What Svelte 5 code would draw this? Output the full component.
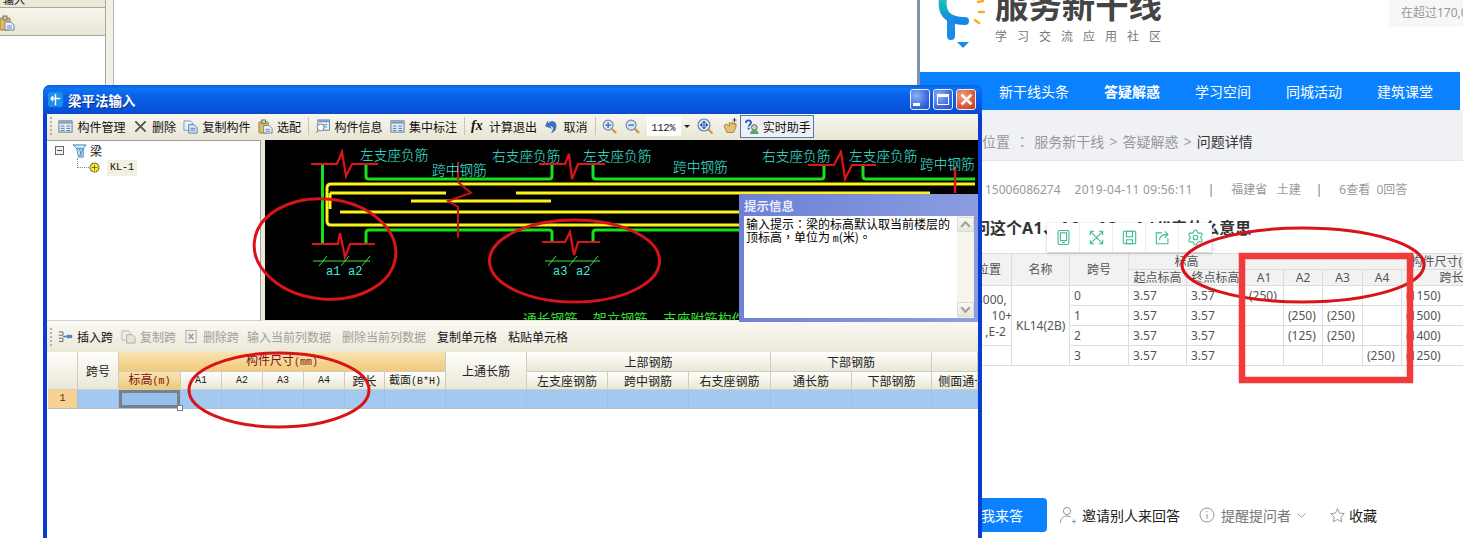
<script>
  const gridCols = [30,41,62,41,41,41,41,40,61,81,81,81,82,81,80,46];
  const rows = [
    { n: '0', a: ['(250)','','',''], s: '(1150)' },
    { n: '1', a: ['','(250)','(250)',''], s: '(1500)' },
    { n: '2', a: ['','(125)','(250)',''], s: '(1400)' },
    { n: '3', a: ['','','','(250)'], s: '(1250)' }
  ];
  const webCols = [62,58,59,58,58,39,39,40,39,100];
  const labels = [
    ['左支座负筋',360,161],['跨中钢筋',432,176],['右支座负筋',492,162],['左支座负筋',583,162],
    ['跨中钢筋',673,173],['右支座负筋',762,162],['左支座负筋',849,162],['跨中钢筋',920,170]
  ];
  let gear = '';
  for (let i = 0; i < 48; i++) {
    const t = (i / 48) * Math.PI * 2;
    const r = 8.2 + 1.5 * Math.cos(t * 6);
    gear += (i ? 'L' : 'M') + (11 + r * Math.sin(t)).toFixed(2) + ' ' + (11 - r * Math.cos(t)).toFixed(2);
  }
  gear += 'Z';
</script>

<svg class="defs" width="0" height="0" aria-hidden="true">
  <defs>
    <symbol id="i-table" viewBox="0 0 16 16"><rect x="1" y="2" width="14" height="12" fill="#e8eef7" stroke="#56749e"/><rect x="1.5" y="2.5" width="13" height="2.5" fill="#7d9bc6"/><path d="M3 7.5h4M3 10h4M3 12.2h4M9 7.5h4M9 10h4M9 12.2h4" stroke="#56749e"/></symbol>
    <symbol id="i-x" viewBox="0 0 16 16"><path d="M2.5 2.5L13.5 13.5M13.5 2.5L2.5 13.5" stroke="#555" stroke-width="2"/></symbol>
    <symbol id="i-copy" viewBox="0 0 16 16"><path d="M1 2h7l2 2v8H1z" fill="#e9eff8" stroke="#7d92b4"/><path d="M6 6h6l3 3v6H6z" fill="#d5e2f4" stroke="#5f7fb0"/><path d="M8 10h5M8 12h5" stroke="#5f7fb0"/></symbol>
    <symbol id="i-clip" viewBox="0 0 16 16"><rect x="1" y="3" width="10" height="12" rx="1" fill="#e0bc62" stroke="#9a7d35"/><rect x="4" y="1" width="4" height="4" fill="#c9c9c0" stroke="#77736a"/><path d="M6 7h6l3 3v5H6z" fill="#eef3fa" stroke="#6b84ab"/><path d="M8 11h5M8 13h5" stroke="#6b84ab"/></symbol>
    <symbol id="i-info" viewBox="0 0 16 16"><rect x="3" y="1" width="12.5" height="11" fill="#eef3fa" stroke="#5f7fb0"/><rect x="3.5" y="1.5" width="11.5" height="2" fill="#6f90c8"/><path d="M9 6h4M9 8.5h4" stroke="#5f7fb0"/><circle cx="6" cy="9" r="3.7" fill="#fff" stroke="#6a7a8a"/><path d="M3.5 12L1.5 14.5" stroke="#c8a14c" stroke-width="2"/></symbol>
    <symbol id="i-undo" viewBox="0 0 16 16"><path d="M1.5 7.5L4 2v3.2C9-.5 15.5 3.6 12 11.5 10.8 13.5 9.5 14 8 14.5 11 11 10.5 6.5 6 7.5L8 10z" fill="#3a72c9" stroke="#2a55a0" stroke-width=".5"/></symbol>
    <symbol id="i-zin" viewBox="0 0 16 16"><circle cx="6.5" cy="6.5" r="5.3" fill="#dbe7f6" stroke="#6b86a8" stroke-width="1.2"/><path d="M10.5 10.5L15 15" stroke="#c49b45" stroke-width="2.4"/><path d="M3.5 6.5h6M6.5 3.5v6" stroke="#3868b4" stroke-width="1.4"/></symbol>
    <symbol id="i-zout" viewBox="0 0 16 16"><circle cx="6.5" cy="6.5" r="5.3" fill="#dbe7f6" stroke="#6b86a8" stroke-width="1.2"/><path d="M10.5 10.5L15 15" stroke="#c49b45" stroke-width="2.4"/><path d="M3.5 6.5h6" stroke="#3868b4" stroke-width="1.4"/></symbol>
    <symbol id="i-pan" viewBox="0 0 16 16"><circle cx="7" cy="7" r="6" fill="#dbe7f6" stroke="#6b86a8" stroke-width="1.2"/><path d="M11.5 11.5L15.5 15.5" stroke="#c49b45" stroke-width="2.2"/><path d="M3.5 7h7M7 3.5v7M7 3l-1.5 1.8h3zM7 11l-1.5-1.8h3zM3 7l1.8-1.5v3zM11 7L9.2 5.5v3z" stroke="#2f5fa8" fill="#2f5fa8" stroke-width=".8"/></symbol>
    <symbol id="i-hand" viewBox="0 0 16 16"><path d="M2 8l3 6.5h6.5L14 9V5.5l-1.6 1V4.5L10.800 6 10 4 8.600 6 7 4.500 7.500 8 4 6z" fill="#e2c078" stroke="#94793d" stroke-width=".8"/><path d="M12.500 0v4M10.500 2h4" stroke="#333" stroke-width=".9"/></symbol>
    <symbol id="i-help" viewBox="0 0 16 16"><circle cx="11" cy="9" r="3" fill="#c9d3c3" stroke="#556"/><path d="M6.500 16c.3-3.500 2.300-4.500 4.500-4.500s4.200 1 4.500 4.500z" fill="#55a860"/><path d="M2 4.200C2 .8 7.500 .6 7.500 3.900 7.500 6 5 6 5 8" fill="none" stroke="#1f5fb8" stroke-width="1.900"/><rect x="4" y="9.300" width="2" height="2" fill="#1f5fb8"/></symbol>
    <symbol id="i-ins" viewBox="0 0 18 16"><path d="M1 2.500h5v4H1M1 10h5v4H1" fill="none" stroke="#555"/><path d="M6 8h4" stroke="#2b6cc4"/><path d="M6 8l2-1.500v3z" fill="#2b6cc4"/><rect x="10" y="6" width="7" height="4" fill="#4f86cc"/></symbol>
    <symbol id="i-copy-off" viewBox="0 0 16 16"><path d="M1 2h7l2 2v8H1z" fill="#eeeee6" stroke="#b9b9b0"/><path d="M6 6h6l3 3v6H6z" fill="#e4e4dc" stroke="#adadA5"/></symbol>
    <symbol id="i-del-off" viewBox="0 0 16 16"><rect x="2" y="1.500" width="11" height="13" fill="#eee" stroke="#aaa"/><path d="M5 5l5 6M10 5l-5 6" stroke="#999" stroke-width="1.500"/></symbol>
    <symbol id="i-beam" viewBox="0 0 16 16"><path d="M1 2h14l-3 4v9H7L5 6z" fill="#cfe5f5" stroke="#3c8ab8"/><path d="M5 6h7M8 6l2 8M12 6L8 14" stroke="#3c8ab8" fill="none"/></symbol>
    <symbol id="i-gearY" viewBox="0 0 12 12"><circle cx="6" cy="6" r="4.800" fill="#fff02a" stroke="#5e5e18" stroke-dasharray="1.500 .6" stroke-width="1.400"/><path d="M6 3v6M3 6h6" stroke="#66661f"/></symbol>
  </defs>
</svg>

<div class="desk">
  <aside class="left-pane">
    <div class="lp-top"><span>输入</span></div>
    <div class="lp-tool"><svg class="ic16"><use href="#i-clip"/></svg></div>
  </aside>
  <div class="lp-rail"></div>

  <section class="web">
    <header class="brand">
      <svg class="logo" viewBox="0 0 48 52" width="48" height="52">
        <defs><linearGradient id="lg" x1="0" y1="0" x2="0" y2="1"><stop offset="0" stop-color="#1fc9b0"/><stop offset="1" stop-color="#1286ea"/></linearGradient></defs>
        <path d="M6 0C4 14 9 23 28 23" fill="none" stroke="url(#lg)" stroke-width="8" stroke-linecap="round"/>
        <path d="M14 24V38" stroke="#1b8ce8" stroke-width="8" stroke-linecap="round"/>
        <path d="M20 44h12l-6 6z" fill="#1b8ce8"/>
        <path d="M41 4l5-1M42 14h5M38 22l4 3" stroke="#f5b021" stroke-width="2.500" stroke-linecap="round"/>
      </svg>
      <div class="brand-text">
        <div class="brand-name">服务新干线</div>
        <div class="brand-sub">学习交流应用社区</div>
      </div>
      <div class="search">在超过170,000</div>
    </header>
    <nav class="nav">
      <span>新干线头条</span><b>答疑解惑</b><span>学习空间</span><span>同城活动</span><span>建筑课堂</span>
    </nav>
    <div class="crumb">当前位置 <span class="tc">：</span> 服务新干线 &gt; 答疑解惑 &gt; <em>问题详情</em></div>
    <div class="meta">
      <span class="m1">15006086274</span><span class="m2">2019-04-11 09:56:11</span><span class="bar">|</span><span class="m3">福建省&nbsp;&nbsp; 土建</span><span class="bar">|</span><span>6查看&nbsp; 0回答</span>
    </div>
    <h1 class="q">请问这个<span class="q-a">A1、A2、A3、A4</span>代表什么意思</h1>
    <div class="web-table-wrap">
      <table class="wt">
        <colgroup>{#each webCols as c}<col style="width:{c}px"/>{/each}</colgroup>
        <thead>
          <tr>
            <th rowspan="2" class="pos">位置</th><th rowspan="2">名称</th><th rowspan="2">跨号</th><th colspan="2">标高</th><th colspan="5" class="group">构件尺寸(mm)</th>
          </tr>
          <tr><th>起点标高</th><th>终点标高</th><th>A1</th><th>A2</th><th>A3</th><th>A4</th><th>跨长</th></tr>
        </thead>
        <tbody>
          {#each rows as r, i}
            <tr>
              {#if i === 0}
                <td rowspan="3" class="pos-c">3000,<br/>&nbsp;&nbsp;&nbsp;&nbsp;&nbsp;10+<br/>&nbsp;&nbsp;&nbsp;,E-2</td>
                <td rowspan="4" class="name">KL14(2B)</td>
              {/if}
              {#if i === 3}<td class="pos-blank"></td>{/if}
              <td>{r.n}</td><td>3.57</td><td>3.57</td>
              {#each r.a as v}<td>{v}</td>{/each}
              <td>{r.s}</td>
            </tr>
          {/each}
        </tbody>
      </table>
      <div class="float-tools">
        <span><svg viewBox="0 0 22 22"><rect x="4" y="2" width="14" height="18" rx="1.500"/><rect x="7" y="5" width="8" height="10"/><path d="M9 17.500h4"/></svg></span>
        <span><svg viewBox="0 0 22 22"><path d="M3 8V3h5M19 8V3h-5M3 14v5h5M19 14v5h-5M3 3l16 16M19 3L3 19"/></svg></span>
        <span><svg viewBox="0 0 22 22"><rect x="3" y="3" width="16" height="16" rx="1"/><rect x="7" y="3" width="8" height="7"/><rect x="7" y="14" width="8" height="5"/></svg></span>
        <span><svg viewBox="0 0 22 22"><path d="M10 5H3v14h15v-7M7 14c1-5 5-7 10-7M14 3l4 4-4 4"/></svg></span>
        <span><svg viewBox="0 0 22 22"><path d={gear}/><circle cx="11" cy="11" r="3"/></svg></span>
      </div>
    </div>
    <footer class="actions">
      <button class="answer">我来答</button>
      <span class="act invite"><svg viewBox="0 0 18 18"><circle cx="8" cy="5" r="3.600"/><path d="M1.500 17c0-5 3-7 6.500-7 1.500 0 2.800.4 3.800 1.200M13 15.500h4M15 13.500v4"/></svg><span>邀请别人来回答</span></span>
      <span class="act remind"><svg viewBox="0 0 18 18"><circle cx="9" cy="9" r="7"/><path d="M9 8v5M9 5v1.300"/></svg><span>提醒提问者</span><svg class="chev" viewBox="0 0 12 12"><path d="M1.500 3.500L6 8l4.500-4.500"/></svg></span>
      <span class="act fav"><svg viewBox="0 0 18 18"><path d="M9 1.800l2.200 4.700 5 .6-3.700 3.500 1 5.100L9 13.200l-4.500 2.500 1-5.100L1.800 7.100l5-.6z"/></svg><span>收藏</span></span>
    </footer>
  </section>

  <section class="dlg">
    <div class="title">
      <svg class="t-ic" viewBox="0 0 16 16"><rect width="16" height="16" rx="3" fill="#1c8fe8"/><path d="M8 2v12M3 7h10M3 7l2.500-2.500M3 7l2.500 2.500" stroke="#fff" stroke-width="1.500" fill="none"/></svg>
      <strong>梁平法输入</strong>
      <div class="wbtns">
        <span class="wb"><i class="min"></i></span>
        <span class="wb"><i class="max"></i></span>
        <span class="wb close"><svg viewBox="0 0 12 12"><path d="M1.500 1.500l9 9M10.500 1.500l-9 9" stroke="#fff" stroke-width="2.600"/></svg></span>
      </div>
    </div>

    <div class="tb">
      <i class="grip"></i>
      <span class="it"><svg class="ic"><use href="#i-table"/></svg>构件管理</span>
      <span class="it"><svg class="ic"><use href="#i-x"/></svg>删除</span>
      <span class="it"><svg class="ic"><use href="#i-copy"/></svg>复制构件</span>
      <span class="it"><svg class="ic"><use href="#i-clip"/></svg>选配</span>
      <i class="sep"></i>
      <span class="it"><svg class="ic"><use href="#i-info"/></svg>构件信息</span>
      <span class="it"><svg class="ic"><use href="#i-table"/></svg>集中标注</span>
      <i class="sep"></i>
      <span class="it"><b class="fx">fx</b>计算退出</span>
      <span class="it"><svg class="ic"><use href="#i-undo"/></svg>取消</span>
      <i class="sep"></i>
      <svg class="ic z"><use href="#i-zin"/></svg>
      <svg class="ic z"><use href="#i-zout"/></svg>
      <span class="combo"><span class="lat">112%</span></span>
      <span class="drop"></span>
      <svg class="ic pan"><use href="#i-pan"/></svg>
      <svg class="ic hand"><use href="#i-hand"/></svg>
      <span class="helper"><svg class="ic"><use href="#i-help"/></svg>实时助手</span>
    </div>

    <div class="main">
      <div class="tree">
        <div class="node">
          <span class="minus"></span>
          <svg class="ic"><use href="#i-beam"/></svg>
          <span class="node-t">梁</span>
        </div>
        <div class="leaf">
          <span class="dots"></span>
          <svg class="gy"><use href="#i-gearY"/></svg>
          <span class="kl lat">KL-1</span>
        </div>
      </div>

      <svg class="cad" viewBox="265 141 713 180" width="713" height="180">
        <g fill="none" stroke="#16e01a" stroke-width="3">
          <path d="M322.500 165V245"/>
          <path d="M366 165V177q0 3 3 3H549q3 0 3-3V165"/>
          <path d="M593 165V177q0 3 3 3H821q3 0 3-3V165"/>
          <path d="M863 165V177q0 3 3 3H975"/>
          <path d="M366 244V234q0-3 3-3H549q3 0 3 3V243"/>
          <path d="M593 243V234q0-3 3-3H978"/>
        </g>
        <g fill="none" stroke="#fbf31c" stroke-width="3">
          <path d="M975 185H331q-4 0-4 4V222q0 4 4 4H975"/>
          <path d="M330 194V210" stroke-width="3"/>
          <path d="M330 194H446M516 194H930M411 202H551M340 213H978"/>
        </g>
        <path d="M458 163V183L471 194L448 202L458 208V239" fill="none" stroke="#cc1018" stroke-width="2"/>
        <path d="M955 168V194" stroke="#e0121a" stroke-width="2.500"/>
        <g fill="none" stroke="#e0121a" stroke-width="2.200">
          <path d="M311 165H337L342 153L346 177L352 165H378"/>
          <path d="M539 165H565L569 155L572 180L578 165H605"/>
          <path d="M808 166H834L841 153L845 180L852 166H876"/>
          <path d="M312 245H338L340 234L345 258L350 245H375"/>
          <path d="M542 243H565L570 233L574 256L578 243H600"/>
        </g>
        <g stroke="#3fe03f" stroke-width="1" fill="none">
          <path d="M313 262H370M319 267L327 257M341 267L349 257M362 267L370 257"/>
          <path d="M545 262H600M548 267L556 257M569 267L577 257M590 267L598 257"/>
        </g>
        <g class="cad-dim">
          <text x="326" y="276">a1</text><text x="348" y="276">a2</text>
          <text x="553" y="276">a3</text><text x="576" y="276">a2</text>
        </g>
        <g class="cad-t">
          {#each labels as l}<text x={l[1]} y={l[2]}>{l[0]}</text>{/each}
        </g>
        <g class="cad-b">
          <text x="523" y="325">通长钢筋</text><text x="593" y="325">架立钢筋</text><text x="663" y="325">支座附筋构件</text>
        </g>
      </svg>

      <div class="tip">
        <div class="tip-h">提示信息</div>
        <div class="tip-b">
          <p>输入提示<span class="tc">：</span>梁的标高默认取当前楼层的顶标高<span class="tc">，</span>单位为 <span class="lat">m</span>(米)<span class="tc">。</span></p>
          <div class="sb">
            <span class="sb-b"><svg viewBox="0 0 12 12"><path d="M2 8l4-4 4 4" fill="none" stroke="#9aa59a" stroke-width="2"/></svg></span>
            <span class="sb-b"><svg viewBox="0 0 12 12"><path d="M2 4l4 4 4-4" fill="none" stroke="#9aa59a" stroke-width="2"/></svg></span>
          </div>
        </div>
      </div>
    </div>

    <div class="tb tb2">
      <i class="grip"></i>
      <span class="it"><svg class="ic ins"><use href="#i-ins"/></svg>插入跨</span>
      <span class="it off"><svg class="ic"><use href="#i-copy-off"/></svg>复制跨</span>
      <span class="it off"><svg class="ic"><use href="#i-del-off"/></svg>删除跨</span>
      <span class="it off plain">输入当前列数据</span>
      <span class="it off plain">删除当前列数据</span>
      <span class="it plain">复制单元格</span>
      <span class="it plain">粘贴单元格</span>
    </div>

    <div class="grid-wrap">
      <table class="grid">
        <colgroup>{#each gridCols as c}<col style="width:{c}px"/>{/each}</colgroup>
        <thead>
          <tr class="r1">
            <th rowspan="2"></th><th rowspan="2">跨号</th>
            <th colspan="7" class="hot">构件尺寸<span class="lat">(mm)</span></th>
            <th rowspan="2">上通长筋</th><th colspan="3">上部钢筋</th><th colspan="2">下部钢筋</th><th></th>
          </tr>
          <tr class="r2">
            <th class="hot">标高<span class="lat">(m)</span></th>
            <th class="lat">A1</th><th class="lat">A2</th><th class="lat">A3</th><th class="lat">A4</th><th>跨长</th><th class="small">截面<span class="lat">(B*H)</span></th>
            <th>左支座钢筋</th><th>跨中钢筋</th><th>右支座钢筋</th><th>通长筋</th><th>下部钢筋</th><th class="clip">侧面通长筋</th>
          </tr>
        </thead>
        <tbody>
          <tr>
            <td class="rh lat">1</td><td></td><td class="sel"><i></i></td>
            {#each Array(13) as _}<td></td>{/each}
          </tr>
        </tbody>
      </table>
    </div>
  </section>

  <svg class="marks" viewBox="0 0 1463 538" width="1463" height="538">
    <g fill="none" stroke="#d8141a" stroke-width="3">
      <ellipse cx="325" cy="249" rx="71" ry="50" transform="rotate(6 325 249)"/>
      <ellipse cx="574.500" cy="261" rx="85" ry="41"/>
      <ellipse cx="279" cy="390" rx="90" ry="37"/>
      <ellipse cx="1303" cy="265" rx="121" ry="37"/>
    </g>
    <rect x="1242" y="256" width="168" height="124" fill="none" stroke="#f33a3a" stroke-width="6.500"/>
  </svg>
</div>

<style>
  :global(body) { margin: 0; background: #fff; }
  .defs { position: absolute; }
  .desk { position: relative; width: 1463px; height: 538px; overflow: hidden; background: #fff; font-family: "Noto Sans", "Noto Sans CJK SC", sans-serif; }
  .lat { font-family: "Liberation Mono", monospace; font-size: 10px; }
  .tc { font-family: "Noto Sans CJK TC", sans-serif; }

  .left-pane { position: absolute; left: 0; top: 0; width: 106px; height: 538px; border-right: 1px solid #a8a8a0; box-sizing: border-box; }
  .lp-top { height: 8px; background: #ece9d8; border-bottom: 1px solid #aca899; overflow: hidden; font-size: 11px; line-height: 1; box-sizing: border-box; }
  .lp-top span { display: block; margin-top: -6px; margin-left: 3px; }
  .lp-tool { height: 28px; background: linear-gradient(#f6f5ec, #e9e6d6); border-bottom: 1px solid #a8a8a0; display: flex; align-items: center; box-sizing: border-box; padding-top: 3px; }
  .ic16 { width: 16px; height: 16px; margin-left: -1px; }
  .lp-rail { position: absolute; left: 106px; top: 0; width: 7px; height: 538px; background: #f1efe6; border-right: 1px solid #b9b9b2; }

  .web { position: absolute; left: 917px; top: 0; width: 546px; height: 538px; border-left: 3px solid #8393ad; overflow: hidden; background: #fff; display: flex; flex-direction: column; box-sizing: border-box; }
  .brand { height: 72px; flex: none; display: flex; align-items: flex-end; padding-bottom: 22px; box-sizing: border-box; padding-left: 17px; }
  .logo { flex: none; margin-right: 10px; }
  .brand-text { padding-bottom: 7px; }
  .brand-name { font-size: 33.4px; line-height: 33px; font-weight: 700; color: #444; white-space: nowrap; }
  .brand-sub { font-size: 12px; line-height: 12px; margin-top: 9px; letter-spacing: 10px; color: #777; white-space: nowrap; }
  .search { align-self: flex-start; margin-left: auto; width: 74px; height: 27px; box-sizing: border-box; background: #f7f7f7; border-radius: 0 0 0 4px; font-size: 12px; line-height: 25px; padding-left: 12px; color: #999; white-space: nowrap; overflow: hidden; }
  .nav { height: 38px; width: 540px; flex: none; background: #0a82ff; color: #fff; display: flex; align-items: center; font-size: 14px; padding-left: 79px; gap: 35px; box-sizing: border-box; }
  .nav b { font-weight: 700; }
  .crumb { height: 51px; flex: none; background: #eff1f4; border-bottom: 1px solid #e6e6e6; box-sizing: border-box; font-size: 14px; line-height: 62px; color: #999; padding-left: 34px; white-space: nowrap; word-spacing: 1.5px; }
  .crumb em { font-style: normal; color: #333; }
  .meta { height: 56px; flex: none; box-sizing: border-box; padding: 19px 0 0 65px; font-size: 12px; line-height: 20px; color: #999; display: flex; white-space: nowrap; }
  .m1 { margin-right: 14px; }
  .m2 { letter-spacing: .25px; }
  .bar { margin: 0 17px 0 15px; color: #777; }
  .q { margin: -1px 0 0 38px; font-size: 16px; line-height: 24px; height: 24px; font-weight: 700; color: #333; white-space: nowrap; flex: none; }
  .q-a { letter-spacing: .4px; }
  .web-table-wrap { position: relative; flex: none; margin-top: 13px; padding-left: 29px; height: 130px; }
  .wt { table-layout: fixed; border-collapse: collapse; width: 552px; font-size: 12px; color: #555; }
  .wt th, .wt td { border: 1px solid #ddd; padding: 0 4px; height: 20px; box-sizing: border-box; font-weight: 400; white-space: nowrap; overflow: hidden; }
  .wt thead th { background: #f2f2f2; height: 16px; line-height: 15px; text-align: center; }
  .wt td { line-height: 19px; text-align: left; }
  .wt .pos { text-align: right; padding-right: 10px; }
  .wt .pos-c { text-align: left; padding-left: 26px; line-height: 16px; }
  .wt .name { text-align: left; padding-left: 4px; }
  .wt .group { text-align: right; padding-right: 13px; }
  .float-tools { position: absolute; left: 127px; top: -30px; width: 165px; height: 29px; display: flex; background: #fff; box-shadow: 0 1px 3px rgba(0,0,0,.25); }
  .float-tools span { flex: 1; display: flex; align-items: center; justify-content: center; border-right: 1px solid #eee; }
  .float-tools svg { width: 17px; height: 17px; fill: none; stroke: #3ebd8c; stroke-width: 1.400; }
  .actions { height: 60px; display: flex; align-items: center; font-size: 14px; color: #222; position: absolute; top: 485px; left: 0; }
  .answer { width: 127px; height: 34px; background: #0a82ff; border: 0; border-radius: 4px; color: #fff; font: inherit; text-align: right; padding: 0 24px 0 0; margin-right: 12px; }
  .act { display: inline-flex; align-items: center; gap: 5px; white-space: nowrap; }
  .act svg { width: 18px; height: 18px; fill: none; stroke: #8e959e; stroke-width: 1; }
  .invite { margin-right: 18px; }
  .remind { color: #777; margin-right: 22px; }
  .act .chev { width: 11px; height: 11px; }
  .fav svg { width: 17px; height: 17px; }
  .fav { gap: 3px; }

  .dlg { position: absolute; left: 43px; top: 85px; width: 939px; height: 470px; background: #fff; box-sizing: border-box; border: solid #0a3cd0; border-width: 0 4px 0 4px; border-radius: 7px 7px 0 0; display: flex; flex-direction: column; font-family: "Noto Sans CJK SC", sans-serif; font-size: 12px; color: #111; }
  .title { flex: none; height: 29px; margin: 0 -4px; padding: 0 6px 0 5px; display: flex; align-items: center; border-radius: 7px 7px 0 0; background: linear-gradient(#0a5be0 0%, #0f74f2 12%, #0861e6 40%, #0554df 80%, #0a4cc8 100%); color: #fff; }
  .t-ic { width: 15px; height: 15px; margin-right: 5px; }
  .title strong { font-size: 13.500px; font-weight: 700; text-shadow: 1px 1px 0 #0a2f90; }
  .wbtns { margin-left: auto; display: flex; gap: 3px; }
  .wb { width: 20px; height: 21px; box-sizing: border-box; border: 1px solid #e8eefc; border-radius: 3px; background: radial-gradient(circle at 30% 30%, #8fb0f2, #2f62d8 70%, #2350c0); display: flex; align-items: center; justify-content: center; }
  .wb.close { background: radial-gradient(circle at 30% 30%, #f0a080, #d8502c 70%, #b83a1a); }
  .wb.close svg { width: 13px; height: 13px; }
  .wb i { display: block; }
  .wb .min { width: 7px; height: 3px; background: #fff; align-self: flex-end; margin: 0 7px 3px 0; }
  .wb .max { width: 12px; height: 11px; box-sizing: border-box; border: 1px solid #fff; border-top-width: 3px; }

  .tb { flex: none; height: 26px; box-sizing: border-box; padding-bottom: 2px; display: flex; align-items: center; background: linear-gradient(#f8f7f0, #e8e5d4); padding-left: 3px; white-space: nowrap; }
  .grip { width: 2px; height: 18px; margin-right: 6px; background: repeating-linear-gradient(#b5b1a0 0 2px, transparent 2px 4px); flex: none; }
  .it { display: inline-flex; align-items: center; gap: 4.500px; margin-right: 7px; }
  .ic { width: 15px; height: 15px; flex: none; overflow: visible; }
  .sep { width: 1px; height: 18px; background: #c8c5b4; margin-right: 6px; flex: none; }
  .fx { width: 13.500px; font-family: "Liberation Serif", serif; font-style: italic; font-weight: 700; font-size: 14px; line-height: 1; }
  .z { margin-right: 8px; }
  .combo { width: 34px; height: 19px; background: #fff; display: block; text-align: center; line-height: 17px; margin-left: -1px; }
  .drop { width: 0; height: 0; border: 3px solid transparent; border-top: 3px solid #222; margin: 3px 7px 0 3px; }
  .pan { width: 16px; height: 16px; margin-right: 9px; }
  .hand { width: 16px; height: 16px; margin-right: 2px; }
  .helper { display: inline-flex; align-items: center; gap: 4px; width: 74px; height: 23px; box-sizing: border-box; border: 1px solid #4f78b8; background: #eef0f4; padding-left: 3px; }

  .main { flex: none; height: 181px; display: flex; gap: 4px; position: relative; background: #ece9d8; }
  .tree { width: 214px; box-sizing: border-box; background: #fff; border-top: 1px solid #a0a0a0; border-right: 1px solid #a0a0a0; border-bottom: 1px solid #d0d0d0; padding-left: 8px; }
  .node { display: flex; align-items: center; height: 17px; margin-top: 1px; }
  .minus { width: 9px; height: 9px; box-sizing: border-box; border: 1px solid #666; margin-right: 8px; background: linear-gradient(#555,#555) center / 5px 1px no-repeat, #f2f2ea; }
  .node-t { margin-left: 3px; }
  .leaf { display: flex; align-items: center; height: 17px; margin-left: 22px; }
  .dots { width: 11px; height: 9px; border-left: 1px dotted #888; border-bottom: 1px dotted #888; margin-top: -9px; }
  .gy { width: 11px; height: 11px; margin-right: 7px; }
  .kl { background: #f2f0e0; padding: 0 3px; line-height: 16px; }
  .cad { display: block; background: #000; flex: none; }
  .cad-t text { fill: #3ee8dc; font-size: 13.700px; font-family: "Noto Sans CJK SC", sans-serif; font-weight: 300; }
  .cad-dim text { fill: #3ee8dc; font-size: 12px; font-family: "Liberation Mono", monospace; }
  .cad-b text { fill: #30e030; font-size: 13.700px; font-family: "Noto Sans CJK SC", sans-serif; }

  .tip { position: absolute; left: 692px; top: 54px; width: 239px; height: 128px; box-sizing: border-box; background: linear-gradient(100deg, #6b80d6, #8e9fe0); padding: 0 4px 4px 5px; display: flex; flex-direction: column; }
  .tip-h { height: 22px; line-height: 24px; color: #e8ecfa; font-weight: 700; font-size: 12.500px; flex: none; }
  .tip-b { flex: 1; background: #fff; display: flex; min-height: 0; }
  .tip-b p { margin: 0; flex: 1; padding: 1px 0 0 2px; font-size: 12px; line-height: 13px; color: #000; }
  .sb { width: 17px; flex: none; background: #f6f5ec; display: flex; flex-direction: column; justify-content: space-between; padding: 1px 0; box-sizing: border-box; }
  .sb-b { height: 15px; background: linear-gradient(#fafaf4, #e6e5da); border: 1px solid #dcdcd0; box-sizing: border-box; display: flex; }
  .sb-b svg { width: 100%; height: 100%; }

  .tb2 { height: 31px; padding-bottom: 0; padding-left: 3px; background: linear-gradient(#faf9f3, #ebe8d9); }
  .tb2 .ins { width: 15px; height: 15px; }
  .tb2 .it { margin-right: 8px; gap: 4px; }
  .tb2 .plain { margin-right: 11px; }
  .off { color: #a0a09a; }

  .grid-wrap { flex: 1; padding-left: 1px; background: #fff; }
  .grid { table-layout: fixed; border-collapse: separate; border-spacing: 0; width: 930px; }
  .grid th { font-weight: 400; color: #222; border-right: 1px solid #cfcdbf; border-bottom: 1px solid #cfcdbf; background: linear-gradient(#fffefa, #e9e7d8); padding: 0; overflow: hidden; white-space: nowrap; box-sizing: border-box; text-align: center; }
  .r1 th { height: 20px; line-height: 14px; }
  .r2 th { height: 18px; line-height: 14px; }
  .grid th.hot { background: linear-gradient(#fae3b2, #f0c97a); color: #7a1212; }
  .grid th.small { font-size: 11px; }
  .grid th.clip { text-align: left; padding-left: 6px; }
  .grid td { height: 19px; background: #a3c9f0; border-right: 1px solid #9dc0e4; border-bottom: 1px solid #b5bec8; box-sizing: border-box; padding: 0; line-height: 14px; }
  .grid td.rh { background: #f8d293; text-align: center; color: #7a1212; }
  .grid td.sel { position: relative; box-shadow: inset 0 0 0 3px #76818d; background: #96bfea; }
  .sel i { position: absolute; right: -3px; bottom: -3px; width: 4px; height: 4px; background: #fff; border: 1px solid #76818d; z-index: 1; }

  .marks { position: absolute; left: 0; top: 0; pointer-events: none; }
</style>
